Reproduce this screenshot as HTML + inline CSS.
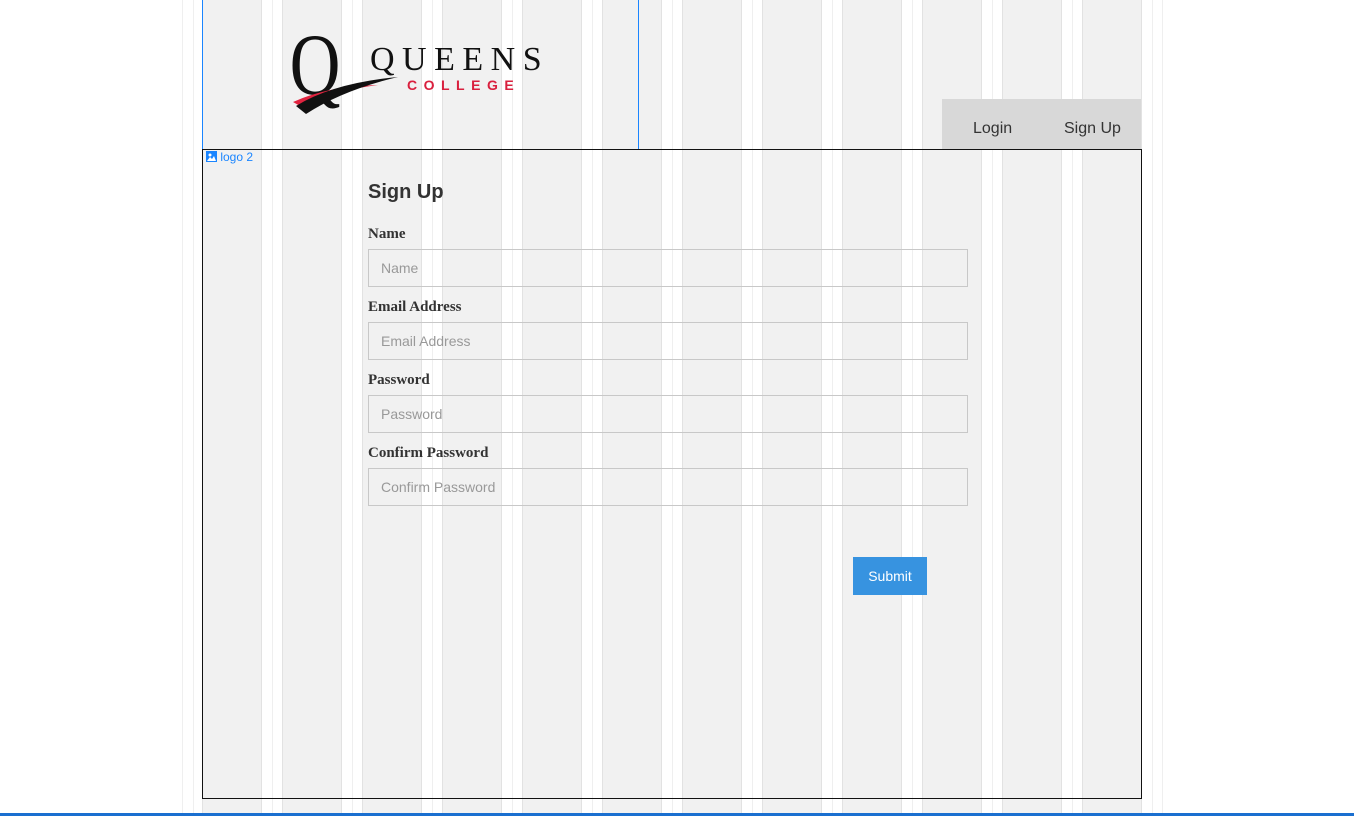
<!DOCTYPE html>
<html><head><meta charset="utf-8"><style>
html,body{margin:0;padding:0;width:1354px;height:816px;overflow:hidden;background:#fff;font-family:"Liberation Sans",sans-serif;}
.grid{position:absolute;left:0;top:0;width:1354px;height:816px;}
.col{position:absolute;top:0;height:816px;width:58px;background:#f1f1f1;border-left:1px solid #e2e2e2;border-right:1px solid #e2e2e2;}
.mid{position:absolute;top:0;height:816px;width:1px;background:#efefef;}
.logo{position:absolute;left:202px;top:-1px;width:435px;height:149px;border:1px solid #1a85ff;}
.main{position:absolute;left:202px;top:149px;width:938px;height:648px;border:1px solid #111;}
.nav{position:absolute;left:942px;top:99px;width:199px;height:50px;background:#d8d8d8;}
.nav span{position:absolute;top:21px;font-size:16px;color:#333;}
.tag{position:absolute;left:206px;top:150px;font-size:12px;color:#1a85ff;}
h1{position:absolute;left:368px;top:181px;margin:0;font-size:20px;font-weight:bold;color:#333;}
.lbl{position:absolute;left:368px;font-family:"Liberation Serif",serif;font-weight:bold;font-size:15px;color:#333;}
.inp{position:absolute;left:368px;width:598px;height:36px;border:1px solid #c8c8c8;font-size:14px;color:#999;line-height:36px;box-sizing:content-box;}
.inp span{position:absolute;left:12px;}
.btn{position:absolute;left:853px;top:557px;width:74px;height:38px;background:#3793e0;color:#fff;font-size:14px;text-align:center;line-height:38px;}
.bottom{position:absolute;left:0;top:813px;width:1354px;height:3px;background:#1a6fd0;}
</style></head><body>
<div class="grid">
<div class="mid" style="left:182px"></div><div class="mid" style="left:193px"></div>
<div class="mid" style="left:1152px"></div><div class="mid" style="left:1162px"></div>
<div class="col" style="left:202px"></div><div class="mid" style="left:272px"></div>
<div class="col" style="left:282px"></div><div class="mid" style="left:352px"></div>
<div class="col" style="left:362px"></div><div class="mid" style="left:432px"></div>
<div class="col" style="left:442px"></div><div class="mid" style="left:512px"></div>
<div class="col" style="left:522px"></div><div class="mid" style="left:592px"></div>
<div class="col" style="left:602px"></div><div class="mid" style="left:672px"></div>
<div class="col" style="left:682px"></div><div class="mid" style="left:752px"></div>
<div class="col" style="left:762px"></div><div class="mid" style="left:832px"></div>
<div class="col" style="left:842px"></div><div class="mid" style="left:912px"></div>
<div class="col" style="left:922px"></div><div class="mid" style="left:992px"></div>
<div class="col" style="left:1002px"></div><div class="mid" style="left:1072px"></div>
<div class="col" style="left:1082px"></div>
</div>
<div class="nav"><span style="left:31px">Login</span><span style="left:122px">Sign Up</span></div>
<div class="logo"></div>
<svg style="position:absolute;left:288px;top:28px" width="270" height="92">
<text x="2" y="66" font-family="Liberation Serif,serif" font-size="88" transform="scale(0.8,1)" fill="#111">Q</text>
<path d="M5 74 Q40 58 90 57 Q50 62 12 78 Z" fill="#e0233f"/>
<path d="M8 78 Q45 55 110 49 Q55 62 18 86 Z" fill="#111"/>
<text x="82" y="42" font-family="Liberation Serif,serif" font-size="34" letter-spacing="7.5" fill="#111">QUEENS</text>
<text x="119" y="62" font-family="Liberation Sans,sans-serif" font-weight="bold" font-size="14" letter-spacing="6.5" fill="#d9203e">COLLEGE</text>
</svg>
<div class="main"></div>
<div class="tag"><svg width="11" height="11" style="vertical-align:-1px"><rect width="11" height="11" fill="#1a85ff"/><circle cx="4" cy="4" r="1.5" fill="#fff"/><path d="M1 10 L4 6 L6 8 L8 5 L10 10Z" fill="#fff"/></svg> logo 2</div>
<h1>Sign Up</h1>
<div class="lbl" style="top:226px">Name</div>
<div class="inp" style="top:249px"><span>Name</span></div>
<div class="lbl" style="top:299px">Email Address</div>
<div class="inp" style="top:322px"><span>Email Address</span></div>
<div class="lbl" style="top:372px">Password</div>
<div class="inp" style="top:395px"><span>Password</span></div>
<div class="lbl" style="top:445px">Confirm Password</div>
<div class="inp" style="top:468px"><span>Confirm Password</span></div>
<div class="btn">Submit</div>
<div class="bottom"></div>
</body></html>
